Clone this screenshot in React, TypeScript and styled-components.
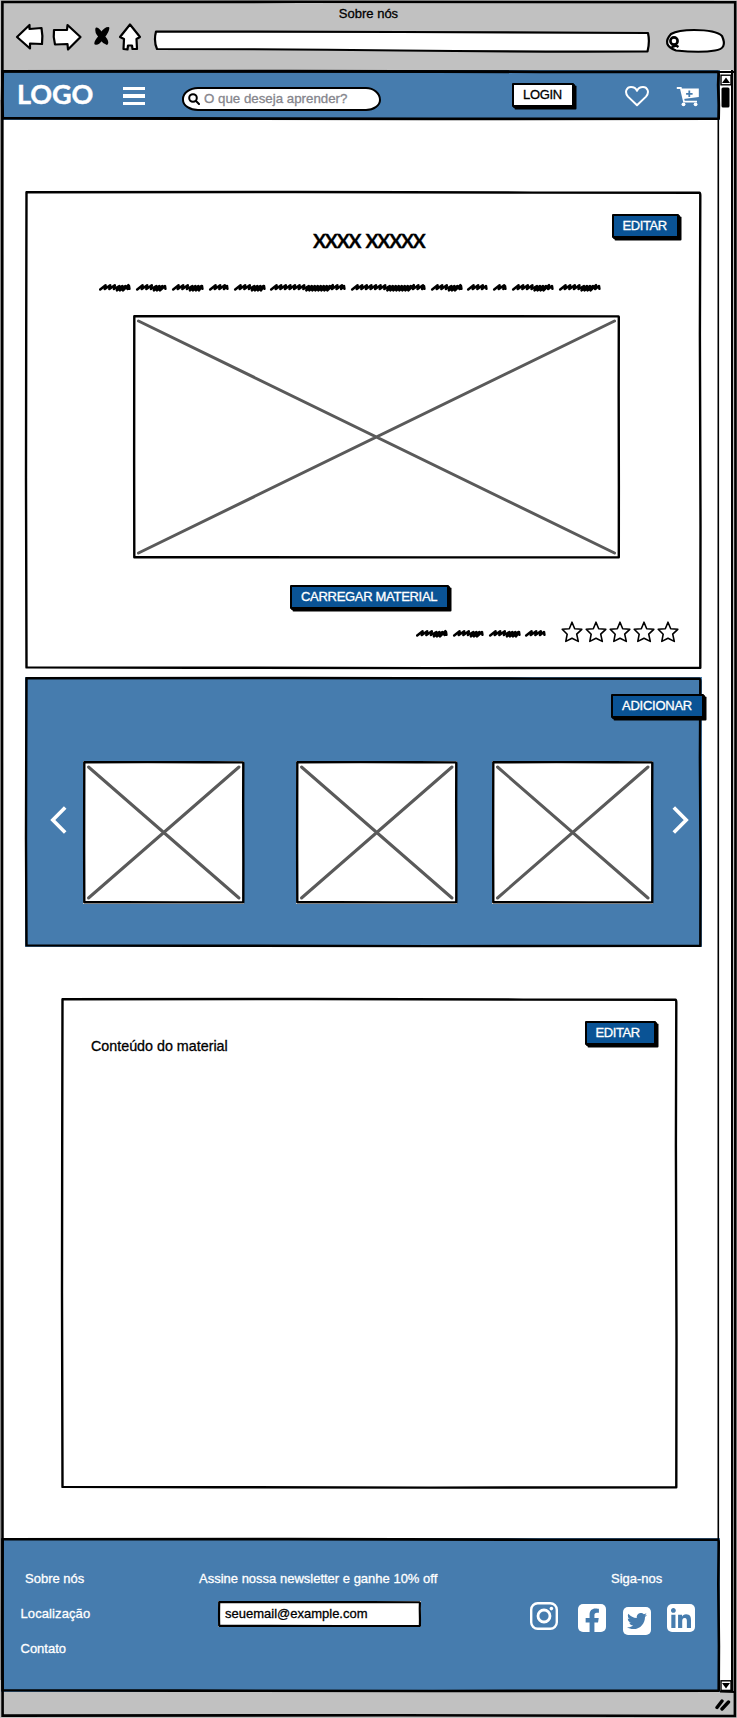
import React from "react";
import styled, { createGlobalStyle } from "styled-components";
import { FaFacebookSquare, FaLinkedin, FaTwitterSquare } from "react-icons/fa";

const BLUE = "#467cae";
const DEEP = "#0a5395";
const GREY = "#c1c1c1";

const Global = createGlobalStyle`
  * { box-sizing: border-box; }
  body { margin: 0; background: #fff; font-family: "Liberation Sans", Arial, sans-serif; }
  svg { display: block; flex: none; }
`;

const Window = styled.div`
  position: relative;
  display: flex;
  flex-direction: column;
  width: 737px;
  height: 1718px;
  background: ${GREY};
`;

const Label = styled.span<{ $color?: string; $size?: number; $spacing?: number; $ml?: number }>`
  display: block;
  margin-left: ${(p) => p.$ml ?? 0}px;
  color: ${(p) => p.$color ?? "#000"};
  font-size: ${(p) => p.$size ?? 13}px;
  letter-spacing: ${(p) => p.$spacing ?? 0}px;
  line-height: 16px;
  white-space: nowrap;
  -webkit-text-stroke: 0.3px currentColor;
`;

const Overlay = styled.svg`
  position: absolute;
  left: 0;
  top: 0;
  overflow: visible;
  pointer-events: none;
`;

/* Slightly uneven pen line running round a box of w by h. */
function Outline({ w, h, stroke = 2.4 }: { w: number; h: number; stroke?: number }) {
  const i = stroke / 2;
  const r = w - i;
  const b = h - i;
  const a = w < 500 ? 0.3 : 1;
  const d = `M${i + 0.3 * a} ${i} L${w * 0.4} ${i - 0.2 * a} L${w * 0.75} ${i + 0.4 * a} L${r - a} ${i + 0.5 * a}
    Q${r} ${i + 0.6 * a} ${r} ${i + 3 * a} L${r - 0.4 * a} ${h * 0.3} L${r + 0.2 * a} ${h * 0.7} L${r} ${b}
    L${w * 0.6} ${b + 0.3 * a} L${w * 0.25} ${b - 0.1 * a} L${i + 0.3 * a} ${b - 0.4 * a} L${i - 0.2 * a} ${h * 0.6} L${i} ${h * 0.3} Z`;
  return (
    <Overlay width={w} height={h} aria-hidden>
      <path d={d} fill="none" stroke="#000" strokeWidth={stroke} strokeLinejoin="round" />
    </Overlay>
  );
}

const Chrome = styled.header`
  height: 70px;
  padding-top: 6px;
  display: flex;
  flex-direction: column;
  align-items: center;
`;

const ChromeTools = styled.div`
  width: 100%;
  height: 35px;
`;

const Body = styled.div`
  display: flex;
  height: 1622px;
  padding-left: 1px;
`;

const Page = styled.div`
  width: 719px;
  flex: none;
  display: flex;
  flex-direction: column;
  background: #fff;
`;

const Bar = styled.nav`
  position: relative;
  width: 719px;
  height: 50px;
  flex: none;
  display: flex;
  align-items: flex-start;
  padding: 12px 0 0 16px;
  background: ${BLUE};
`;

const Logo = styled.div`
  width: 106px;
  font-family: Lato, "Liberation Sans", sans-serif;
  font-size: 27px;
  font-weight: 700;
  line-height: 26px;
  margin-top: -1px;
  letter-spacing: -0.1px;
  color: #fff;
  -webkit-text-stroke: 0.4px #fff;
`;

const Burger = styled.div`
  width: 22px;
  height: 18px;
  margin: 5px 37px 0 0;
  display: flex;
  flex-direction: column;
  justify-content: space-between;
  &::before, &::after, i { content: ""; height: 3.4px; background: #fff; }
`;

const Search = styled.div`
  width: 199px;
  height: 24px;
  margin: 4.5px 131px 0 0;
  display: flex;
  align-items: center;
  padding: 0 0 0 4px;
  background: #fff;
  border: 2px solid #000;
  border-radius: 16px 15px 15px 16px / 12px 13px 11px 11px;
`;

const Btn = styled.button<{ $w: number; $light?: boolean }>`
  width: ${(p) => p.$w}px;
  height: 24px;
  flex: none;
  display: flex;
  align-items: center;
  margin: ${(p) => (p.$light ? 1 : 0)}px 0 0;
  padding: 0 0 0 9px;
  border: 2px solid #000;
  border-radius: 1px;
  background: ${(p) => (p.$light ? "#fff" : DEEP)};
  box-shadow: 2.5px 2.5px 0 #000, 1px 1px 0 #000;
  font-family: inherit;
  position: relative;
`;

const Icons = styled.div`
  display: flex;
  gap: 27px;
  margin: 4px 0 0 51px;
`;

const Content = styled.main`
  height: 1418px;
  display: flex;
  flex-direction: column;
  padding: 71px 0 0 24px;
`;

const Card = styled.section<{ $w: number; $h: number; $fill?: string }>`
  position: relative;
  width: ${(p) => p.$w}px;
  height: ${(p) => p.$h}px;
  flex: none;
  display: flex;
  flex-direction: column;
  background: ${(p) => p.$fill ?? "#fff"};
`;

const CardHead = styled.div<{ $top: number; $right: number; $h: number }>`
  display: flex;
  justify-content: flex-end;
  height: ${(p) => p.$h}px;
  padding: ${(p) => p.$top}px 0 0;
  margin-right: ${(p) => p.$right}px;
`;

const Title = styled.h1`
  margin: 0 0 0 288px;
  font-family: Lato, "Liberation Sans", sans-serif;
  font-size: 19.4px;
  font-weight: 700;
  line-height: 22px;
  height: 24px;
  letter-spacing: -1.15px;
  word-spacing: 1.5px;
  white-space: nowrap;
  -webkit-text-stroke: 0.3px #000;
`;

const Picture = styled.div<{ $w: number; $h: number }>`
  position: relative;
  flex: none;
  width: ${(p) => p.$w}px;
  height: ${(p) => p.$h}px;
  background: #fff;
`;

function Placeholder({ w, h }: { w: number; h: number }) {
  return (
    <Picture $w={w} $h={h}>
      <Overlay width={w} height={h}>
        <path
          d={`M5.5 6 L${w - 5.5} ${h - 5.5} M${w - 5.5} 6 L5.5 ${h - 5.5}`}
          stroke="#5a5a5a"
          strokeWidth="3"
          strokeLinecap="round"
        />
      </Overlay>
      <Outline w={w} h={h} />
    </Picture>
  );
}

/* Scrawled stand-in for a line of words; each pair is a start and an end. */
function Scribble({ words, width }: { words: [number, number][]; width: number }) {
  const d = words
    .map(([a, b]) => {
      let x = a + 1.2;
      let s = `M${x} 7.4`;
      const n = b - a;
      while (x < b - 7) {
        const t = (x - a) / n;
        const dense = n > 24 && t > 0.42 && t < 0.75;
        const step = dense ? 3 : 4.6;
        s += ` L${x + 5.4} ${dense ? 4 : 3.2} L${x + step} ${dense ? 8.4 : 7}`;
        x += step;
      }
      return `${s} L${b - 2} 4 L${b - 1.6} 6.8`;
    })
    .join(" ");
  return (
    <svg width={width} height="11" aria-hidden>
      <path d={d} fill="none" stroke="#000" strokeWidth="2.5" strokeLinejoin="round" strokeLinecap="round" />
    </svg>
  );
}

const Line = styled.div<{ $ml: number; $mt: number }>`
  display: flex;
  margin: ${(p) => p.$mt}px 0 0 ${(p) => p.$ml}px;
`;

const Stars = styled.div`
  display: flex;
  gap: 2px;
  margin: -6.5px 0 0 14.5px;
`;

const Star = () => (
  <svg width="22" height="22" viewBox="0 0 22 22">
    <path
      d="M11 1.2 L13.7 7.7 L20.8 8.3 L15.7 13.2 L17.3 20.4 L11 17.2 L4.8 20.4 L6.2 13.2 L1.2 8.3 L8.3 7.7 Z"
      fill="#fff"
      stroke="#000"
      strokeWidth="1.6"
      strokeLinejoin="round"
    />
  </svg>
);

const Carousel = styled.div`
  display: flex;
  align-items: flex-start;
  padding-left: 24.8px;
`;

const Arrow = styled.svg<{ $ml: number }>`
  margin: 45px 0 0 ${(p) => p.$ml}px;
`;

const Slot = styled.div<{ $ml: number }>`
  margin-left: ${(p) => p.$ml}px;
`;

const Foot = styled.footer`
  position: relative;
  width: 719px;
  height: 154px;
  display: flex;
  background: ${BLUE};
  padding-top: 33px;
`;

const Links = styled.div`
  width: 198px;
  padding-left: 19.5px;
  display: flex;
  flex-direction: column;
  gap: 19px;
`;

const News = styled.div`
  width: 331px;
`;

const Email = styled.div`
  position: relative;
  width: 203px;
  height: 26px;
  margin: 14px 0 0 19px;
  padding: 4.5px 0 0 7px;
  background: #fff;
`;

const Social = styled.div`
  display: flex;
  margin-top: 14.5px;
`;

const Badge = styled.span<{ $ml: number; $mt: number }>`
  width: 28px;
  height: 28px;
  margin: ${(p) => p.$mt}px 0 0 ${(p) => p.$ml}px;
  border-radius: 5px;
  overflow: hidden;
  color: #fff;
`;

const Scroll = styled.div`
  width: 13px;
  height: 1622px;
  display: flex;
  flex-direction: column;
  justify-content: space-between;
  background: #fff;
  border-right: 2px solid #000;
  padding-top: 3px;
`;

const Status = styled.div`
  display: flex;
  justify-content: flex-end;
  padding: 6px 6px 0 0;
`;

const Lens = ({ size }: { size: number }) => (
  <svg width={size} height={size} viewBox="0 0 12 12" fill="none" stroke="#000" strokeWidth="2" strokeLinecap="round">
    <circle cx="5" cy="5" r="3.8" />
    <path d="M8 8 L11 11" />
  </svg>
);

export default function App() {
  return (
    <Window>
      <Global />
      <Chrome>
        <Label>Sobre nós</Label>
        <ChromeTools>
          <svg width="737" height="35" viewBox="0 22 737 35" fill="#fff" stroke="#000" strokeWidth="2.2" strokeLinejoin="round">
            <path d="M17 37 L29.5 25 L29.5 29 L41.5 28 Q43 36 42 44 L30 43.5 L30 48.5 Z" />
            <path d="M54 30 L67 30 L67.5 25 L80.5 37 L68 49.5 L67.5 44 L55 44.5 Q53 37 54 30 Z" />
            <path d="M96.5 28.5 Q99 29 101.3 33.5 Q105 28 108.3 28 Q108 32 104 36.5 Q108.5 42 106.8 43.8 Q104 43 101.5 39.5 Q98 44.4 95.4 43.5 Q95.5 41 99.5 36.5 Q95.5 32 96.5 28.5 Z" fill="#000" strokeWidth="2.2" />
            <path d="M130 24.5 L140 37 L136.5 39 L137 49 L132.5 49 L132 45.5 L128 45.5 L127.5 49.5 L123.5 49 L124 39 L120 37 Z" />
            <path d="M156 31.5 Q280 32 400 32 T648 33 Q650 42 647.5 51.5 Q520 52 400 50.5 T157 49 Q153.5 41 156 31.5 Z" />
            <path d="M671 34 Q678 30 694 30 Q716 30 722 36 Q728 49 715 50.5 Q701 53 676 50.5 Q661 45 671 34 Z" />
            <g strokeWidth="2.6">
              <circle cx="674" cy="41" r="3.6" />
              <path d="M671.5 47 L676 45.5 L678.5 47" />
            </g>
          </svg>
        </ChromeTools>
      </Chrome>

      <Body>
        <Page>
          <Bar>
            <Logo>LOGO</Logo>
            <Burger><i /></Burger>
            <Search>
              <Lens size={12} />
              <Label $color="#85858c" $size={13.3} $ml={4}>O que deseja aprender?</Label>
            </Search>
            <Btn $w={62} $light>
              <Label $spacing={-0.3}>LOGIN</Label>
            </Btn>
            <Icons>
              <svg width="24" height="21" viewBox="0 0 24 21">
                <path
                  d="M12 19.3 L3 10.6 C-1.2 5.5 2.2 1.1 6 1.1 C9 1.1 11 2.6 12 4.8 C13 2.6 15 1.1 18 1.1 C21.8 1.1 25.2 5.5 21 10.6 Z"
                  fill="none"
                  stroke="#fff"
                  strokeWidth="2"
                  strokeLinejoin="round"
                />
              </svg>
              <svg width="24" height="21" viewBox="0 0 24 21">
                <path d="M0.8 2 H4.8 L8 15.6 H21" fill="none" stroke="#fff" strokeWidth="1.8" />
                <path d="M5.5 2.6 H22.8 V11 L7.5 13 Z" fill="#fff" />
                <circle cx="7.5" cy="18.3" r="1.9" fill="#fff" />
                <circle cx="19.6" cy="18.3" r="1.9" fill="#fff" />
                <path d="M13.3 4.6 V11 M10.1 7.8 H16.6" stroke={BLUE} strokeWidth="1.8" />
              </svg>
            </Icons>
            <Outline w={719} h={50} stroke={2.8} />
          </Bar>

          <Content>
            <Card $w={676.5} $h={478}>
              <Outline w={676.5} h={478} />
              <CardHead $top={22.5} $right={23} $h={39}>
                <Btn $w={67}><Label $color="#fff" $spacing={-0.4}>EDITAR</Label></Btn>
              </CardHead>
              <Title>XXXX XXXXX</Title>
              <Line $ml={74} $mt={28}>
                <Scribble
                  width={510}
                  words={[
                    [0, 32], [37, 68], [73, 105], [110, 130], [135, 167], [171, 247],
                    [252, 327], [332, 364], [368, 389], [394, 408], [413, 455], [460, 502],
                  ]}
                />
              </Line>
              <Line $ml={107.5} $mt={21.5}>
                <Placeholder w={487} h={243.5} />
              </Line>
              <Line $ml={265} $mt={26.5}>
                <Btn $w={159}><Label $color="#fff" $spacing={-0.3}>CARREGAR MATERIAL</Label></Btn>
              </Line>
              <Line $ml={390.5} $mt={19}>
                <Scribble width={131} words={[[0, 32], [37, 68], [73, 105], [109, 130]]} />
                <Stars>
                  <Star /><Star /><Star /><Star /><Star />
                </Stars>
              </Line>
            </Card>

            <Line $ml={0} $mt={8}>
              <Card $w={676.5} $h={270} $fill={BLUE}>
                <Outline w={676.5} h={270} />
                <CardHead $top={17} $right={-2.5} $h={84}>
                  <Btn $w={93}><Label $color="#fff" $spacing={-0.25}>ADICIONAR</Label></Btn>
                </CardHead>
                <Carousel>
                  <Arrow $ml={0} width="17" height="28" viewBox="0 0 17 28">
                    <path d="M15.2 1.6 L2.8 14 L15.2 26.4" fill="none" stroke="#fff" strokeWidth="3.6" />
                  </Arrow>
                  <Slot $ml={16}><Placeholder w={161.5} h={142.5} /></Slot>
                  <Slot $ml={51.5}><Placeholder w={161.5} h={142.5} /></Slot>
                  <Slot $ml={34.5}><Placeholder w={161.5} h={142.5} /></Slot>
                  <Arrow $ml={18.5} width="17" height="28" viewBox="0 0 17 28">
                    <path d="M1.8 1.6 L14.2 14 L1.8 26.4" fill="none" stroke="#fff" strokeWidth="3.6" />
                  </Arrow>
                </Carousel>
              </Card>
            </Line>

            <Line $ml={36} $mt={51}>
              <Card $w={616.5} $h={490.5}>
                <Outline w={616.5} h={490.5} />
                <CardHead $top={22.5} $right={22} $h={39.5}>
                  <Btn $w={71}><Label $color="#fff" $spacing={-0.4}>EDITAR</Label></Btn>
                </CardHead>
                <Label $size={14.3} $ml={30}>Conteúdo do material</Label>
              </Card>
            </Line>
          </Content>

          <Foot>
            <Links>
              <Label $color="#fff" $ml={4.5}>Sobre nós</Label>
              <Label $color="#fff" $spacing={0.1}>Localização</Label>
              <Label $color="#fff">Contato</Label>
            </Links>
            <News>
              <Label $color="#fff">Assine nossa newsletter e ganhe 10% off</Label>
              <Email>
                <Outline w={203} h={26} stroke={2.2} />
                <Label>seuemail@example.com</Label>
              </Email>
            </News>
            <div>
              <Label $color="#fff" $ml={81}>Siga-nos</Label>
              <Social>
                <Badge $ml={0} $mt={0}>
                  <svg width="28" height="28" viewBox="0 0 28 28" fill="none" stroke="#fff" strokeWidth="2.4">
                    <rect x="1.2" y="1.2" width="25.6" height="25.6" rx="6.5" />
                    <circle cx="14" cy="14" r="6" strokeWidth="2.8" />
                    <circle cx="21.4" cy="6.6" r="1.8" fill="#fff" stroke="none" />
                  </svg>
                </Badge>
                <Badge $ml={20} $mt={2}><FaFacebookSquare size={28} viewBox="0 32 448 448" /></Badge>
                <Badge $ml={17} $mt={5}><FaTwitterSquare size={28} viewBox="0 32 448 448" /></Badge>
                <Badge $ml={16} $mt={2}><FaLinkedin size={28} viewBox="0 32 448 448" /></Badge>
              </Social>
            </div>
            <Outline w={719} h={154} stroke={2.6} />
          </Foot>
        </Page>

        <Scroll>
          <svg width="12" height="36" viewBox="0 0 12 36">
            <rect x="1" y="2.2" width="10" height="9.6" fill="#fff" stroke="#000" strokeWidth="1.4" />
            <path d="M2 10 L6 4.5 L10 10 Z" />
            <rect x="1.5" y="14.5" width="8" height="20" rx="1.5" />
          </svg>
          <svg width="12" height="12" viewBox="0 0 12 12">
            <rect x="1" y="0.8" width="10" height="9.6" fill="#fff" stroke="#000" strokeWidth="1.4" />
            <path d="M2 3 L6 8.5 L10 3 Z" />
          </svg>
        </Scroll>
      </Body>

      <Status>
        <svg width="16" height="13" viewBox="0 0 16 13" stroke="#000" strokeWidth="3.4" strokeLinecap="round">
          <path d="M2 9.5 L7 3 M7 11 L13.5 4" />
        </svg>
      </Status>

      <Overlay width={737} height={1718} fill="none" stroke="#000">
        <path d="M2.4 2 L300 1.8 L735.2 2.2 L735.6 700 L734.9 1716 L400 1715.2 L2.6 1715.6 L2 900 Z" strokeWidth="2.6" />
        <path d="M3 71.3 L735 71.8" strokeWidth="2.4" />
        <path d="M720 1691.6 L735 1692" strokeWidth="2" />
        <path d="M718.3 120 V1539" strokeWidth="1.6" />
        <path d="M0.4 100 V1680" stroke="#777" strokeWidth="0.8" />
      </Overlay>
    </Window>
  );
}
